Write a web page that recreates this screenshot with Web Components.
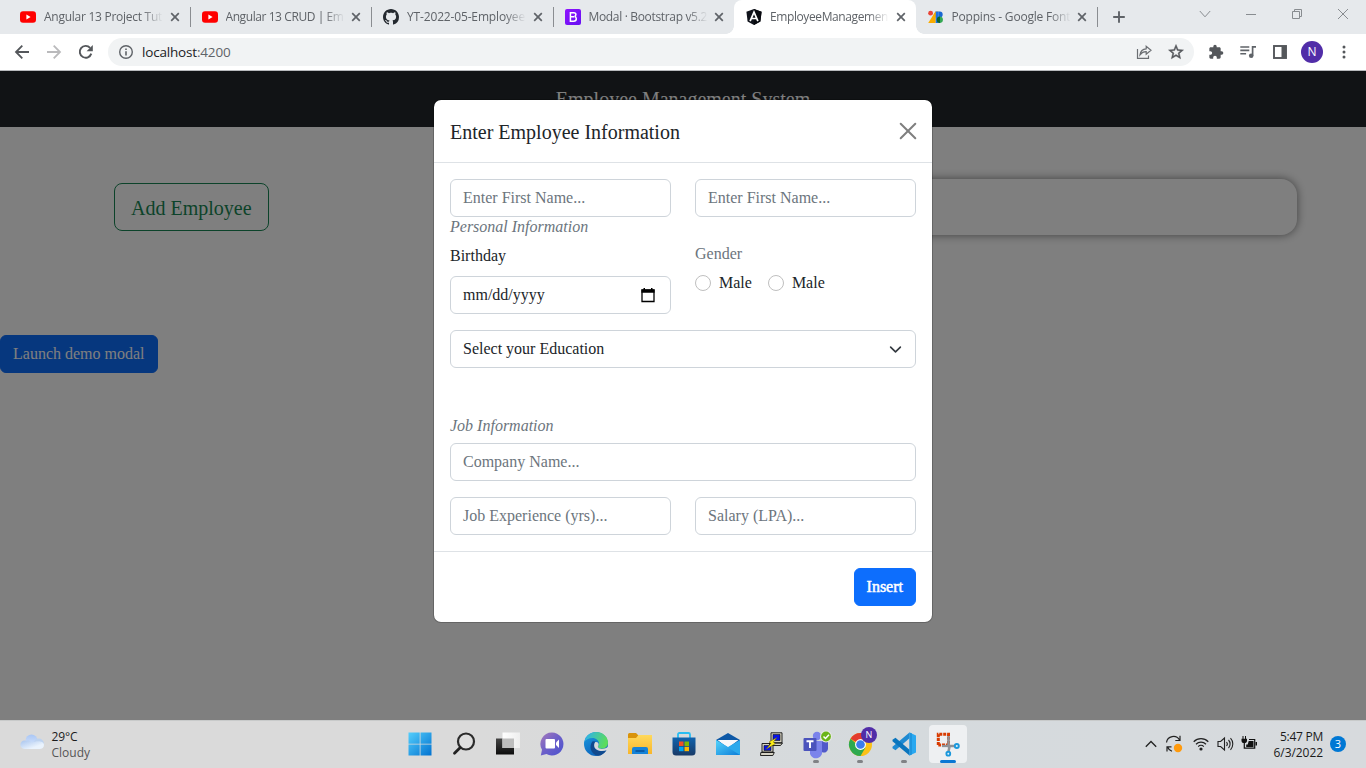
<!DOCTYPE html>
<html lang="en">
<head>
<meta charset="utf-8">
<title>EmployeeManagement</title>
<style>
html,body{margin:0;height:100%;overflow:hidden}
body{font-family:"Liberation Serif","Times New Roman",serif}
</style>
</head>
<body>
<desktop-screen></desktop-screen>
<script>
const ICONS = {
youtube:['0 0 16 16','<rect y="2.2" width="16" height="11.6" rx="3" fill="#f00"/><path d="M6.4 5.5v5l4.2-2.5z" fill="#fff"/>'],
github:['0 0 16 16','<path fill="#24292f" d="M8 0C3.58 0 0 3.58 0 8c0 3.54 2.29 6.53 5.47 7.59.4.07.55-.17.55-.38 0-.19-.01-.82-.01-1.49-2.01.37-2.53-.49-2.69-.94-.09-.23-.48-.94-.82-1.13-.28-.15-.68-.52-.01-.53.63-.01 1.08.58 1.23.82.72 1.21 1.87.87 2.33.66.07-.52.28-.87.51-1.07-1.78-.2-3.64-.89-3.64-3.95 0-.87.31-1.59.82-2.15-.08-.2-.36-1.02.08-2.12 0 0 .67-.21 2.2.82.64-.18 1.32-.27 2-.27s1.36.09 2 .27c1.53-1.04 2.2-.82 2.2-.82.44 1.1.16 1.92.08 2.12.51.56.82 1.27.82 2.15 0 3.07-1.87 3.75-3.65 3.95.29.25.54.73.54 1.48 0 1.07-.01 1.93-.01 2.2 0 .21.15.46.55.38A8.01 8.01 0 0 0 16 8c0-4.42-3.58-8-8-8z"/>'],
bootstrap:['0 0 16 16','<defs><linearGradient id="g" x2="1" y2="1"><stop stop-color="#9013fe"/><stop offset="1" stop-color="#6610f2"/></linearGradient></defs><rect width="16" height="16" rx="2" fill="url(#g)"/><path d="M5.4 3.7h3.4c1.4 0 2.1.8 2.1 1.9 0 1-.6 1.7-1.4 1.9 1.1.2 1.8 1 1.8 2.2 0 1.600-1.100 2.500-2.800 2.500H5.400zM5.400 7.700h3.600" fill="none" stroke="#fff" stroke-width="1.500"/>'],
angular:['0 0 16 16','<path d="M8 0l7.600 2.700-1.200 9.900L8 16l-6.400-3.400L.4 2.700z" fill="#10131b"/><path d="M8 0l7.600 2.700-1.200 9.900L8 16z" fill="#080a0f"/><path d="M4.100 12.200L8 3.200l3.900 9M5.700 9.500h4.600" fill="none" stroke="#fff" stroke-width="1.700"/>'],
gfonts:['0 0 16 16','<path d="M7.500 2.500h3L5 14H.2z" fill="#f9ab00"/><circle cx="2.600" cy="4.200" r="2.400" fill="#ea4335"/><path d="M7.500 2.500h3.300V14H7.500z" fill="#1a73e8"/><path d="M5.500 6l2-3.500V14H2.200z" fill="#f9ab00"/><path d="M10.800 2.500h1a2.900 2.900 0 0 1 0 5.800h-1z" fill="#1967d2"/><path d="M10.800 7.500h1.400a3.300 3.300 0 0 1 0 6.500h-1.400z" fill="#34a853"/><path d="M12 7.500v6.400a3.200 3.200 0 0 1 0-6.400" fill="#0d652d"/>'],
x:['0 0 10 10','<path d="M1.200 1.200l7.600 7.600M8.800 1.200L1.200 8.800" stroke="#5f6368" stroke-width="1.700"/>'],
plus:['0 0 12 12','<path d="M6 .2v11.600M.2 6h11.600" stroke="#5f6368" stroke-width="1.900"/>'],
wchev:['0 0 12 8','<path d="M.8 1L6 6.800 11.200 1" fill="none" stroke="#888c90"/>'],
wmin:['0 0 12 10','<path d="M1 5.500h10" stroke="#888c90"/>'],
wmax:['0 0 12 12','<path d="M1.500 3.500h7v7h-7zM3.500 3.500v-2h7v7h-2" fill="none" stroke="#888c90"/>'],
wx:['0 0 12 12','<path d="M1 1l10 10M11 1L1 11" stroke="#888c90"/>'],
back:['0 0 16 16','<path fill="none" stroke="#54575b" stroke-width="1.800" d="M15 8H2.200M8.300 1.700L2 8l6.300 6.300"/>'],
fwd:['0 0 16 16','<path fill="none" stroke="#bababc" stroke-width="1.800" d="M1 8h12.800M7.700 1.700L14 8l-6.300 6.300"/>'],
reload:['0 0 16 16','<path d="M13.300 9.600a5.900 5.900 0 1 1-1.200-5.700" fill="none" stroke="#54575b" stroke-width="1.900"/><path d="M14.800 1v6.200H8.600z" fill="#54575b"/>'],
info:['0 0 16 16','<circle cx="8" cy="8" r="6.300" fill="none" stroke="#5f6368" stroke-width="1.400"/><path d="M8 7.200v4.200M8 4.400V6" stroke="#5f6368" stroke-width="1.600"/>'],
share:['0 0 16 16','<path d="M1.500 5v9.300h11v-2.800M4 10.800C4.500 7 6.600 5 10.200 4.800V2.200L15 6.200l-4.800 4V7.700C7.500 7.600 5.600 8.700 4 10.800z" fill="none" stroke="#6b6e72" stroke-width="1.200"/>'],
star:['0 0 24 24','<path fill="#54575b" stroke="#54575b" stroke-width=".6" d="M22 9.240l-7.190-.62L12 2 9.190 8.630 2 9.240l5.460 4.730L5.820 21 12 17.270 18.180 21l-1.630-7.030zM12 15.400l-3.760 2.270 1-4.280-3.320-2.880 4.380-.38L12 6.100l1.710 4.040 4.380.38-3.320 2.880 1 4.280z"/>'],
puzzle:['0 0 24 24','<path fill="#54575b" d="M20.500 11H19V7c0-1.100-.9-2-2-2h-4V3.500a2.500 2.500 0 0 0-5 0V5H4c-1.100 0-1.990.9-1.990 2v3.800H3.500c1.490 0 2.700 1.210 2.700 2.700s-1.210 2.700-2.700 2.700H2V20c0 1.100.9 2 2 2h3.800v-1.500c0-1.490 1.210-2.700 2.700-2.700s2.700 1.210 2.700 2.700V22H17c1.100 0 2-.9 2-2v-4h1.500a2.500 2.500 0 0 0 0-5z"/>'],
music:['0 0 16 14','<path d="M.3 2h9M.3 5.400h9M.3 8.800h5.800" stroke="#5f6368" stroke-width="1.600"/><path d="M12.600 10.800V1.800H16" fill="none" stroke="#5f6368" stroke-width="1.700"/><circle cx="11.200" cy="10.800" r="2.300" fill="#5f6368"/>'],
panel:['0 0 14 14','<rect x="1" y="1" width="12" height="12" fill="none" stroke="#54575b" stroke-width="1.900"/><path d="M8.500 1H13v12H8.500z" fill="#54575b"/>'],
dots:['0 0 4 14','<circle cx="2" cy="2" r="1.500" fill="#54575b"/><circle cx="2" cy="7" r="1.500" fill="#54575b"/><circle cx="2" cy="12" r="1.500" fill="#54575b"/>'],
mclose:['0 0 16 16','<path d="M.7.700l14.600 14.600M15.300.700L.7 15.300" stroke="#7f7f7f" stroke-width="2" stroke-linecap="round"/>'],
cal:['0 0 14 14','<path d="M1 2h12v11.500H1z" fill="none" stroke="#000" stroke-width="1.300"/><path d="M.4 1.500h13.200v3.300H.4zM2.500 0H4v2H2.500zM10 0h1.500v2H10z"/>'],
chev:['0 0 16 16','<path d="M2 5l6 6 6-6" fill="none" stroke="#343a40" stroke-width="2" stroke-linecap="round" stroke-linejoin="round"/>'],
cloud:['0 0 24 16','<defs><linearGradient id="a" x2="0" y2="1"><stop stop-color="#a9c6f5"/><stop offset="1" stop-color="#d8e6fb"/></linearGradient><linearGradient id="b" x2="1" y2="1"><stop stop-color="#a8c4ee"/><stop offset=".7" stop-color="#eaf3fd"/></linearGradient></defs><circle cx="11.500" cy="6.500" r="6" fill="url(#a)"/><circle cx="18.800" cy="9.500" r="5" fill="#bdd3f0"/><path d="M4.500 15a4.300 4.300 0 1 1 2-8.200c2.500-1 4.500.2 5.500 2 3-2.200 12-2.800 12 2.200 0 2.500-2 4-4.500 4z" fill="url(#b)"/>'],
start:['0 0 24 24','<defs><linearGradient id="s" gradientUnits="userSpaceOnUse" x1="0" y1="0" x2="24" y2="24"><stop stop-color="#55d0fd"/><stop offset="1" stop-color="#0070cf"/></linearGradient></defs><path fill="url(#s)" d="M.5.500h11.200v11.200H.5zM12.500.500h11v11.200h-11zM.5 12.500h11.200v11H.5zM12.500 12.500h11v11h-11z"/>'],
search:['0 0 24 24','<circle cx="14" cy="9.500" r="8" fill="#e4e4e4" fill-opacity=".5" stroke="#2b2b2b" stroke-width="2.200"/><path d="M8.300 15.500L2.500 21.300" stroke="#222" stroke-width="2.800" stroke-linecap="round"/>'],
task:['0 0 24 24','<defs><linearGradient id="a" x2="0" y2="1"><stop stop-color="#444"/><stop offset="1" stop-color="#0c0c0c"/></linearGradient><linearGradient id="w" x2="1"><stop stop-color="#fff"/><stop offset="1" stop-color="#eee"/></linearGradient></defs><path d="M0 6.500h18v16H0z" fill="url(#a)"/><path d="M6.500.500h17.500v15.500H6.500z" fill="url(#w)"/><path d="M6.500 6.500H18V16H6.500z" fill="#bdbdbd"/>'],
chat:['0 0 24 24','<defs><linearGradient id="a" x2="1" y2="1"><stop stop-color="#a57abb"/><stop offset=".5" stop-color="#6c5fc9"/><stop offset="1" stop-color="#4a52cf"/></linearGradient></defs><path d="M12 .5a11.500 11.500 0 1 1-5.500 21.600L.8 23.500 2 17.800A11.500 11.500 0 0 1 12 .5z" fill="url(#a)"/><rect x="5.500" y="7" width="9.500" height="9.500" rx="1" fill="#fff"/><path d="M16 10.500l3-3v8.500l-3-3z" fill="#fff"/>'],
edge:['0 0 24 24','<defs><linearGradient id="a" x2="1" y1="0" y2=".3"><stop offset=".1" stop-color="#2fb3e8"/><stop offset="1" stop-color="#5bdc5c"/></linearGradient><linearGradient id="b" x2=".6" y2="1"><stop stop-color="#1b9de2"/><stop offset="1" stop-color="#0b5fb8"/></linearGradient></defs><circle cx="12" cy="12" r="12" fill="url(#b)"/><path d="M.6 9.500C2 3.500 6.500 0 12 0c7 0 12 5 12 10.500 0 4-2.700 6.200-6 6.200-2.500 0-4.200-1-4.200-1.900 0-.7 1.200-1 1.200-3.200C15 8.500 12 6 8.500 6 4.500 6 1.800 8 .6 9.500z" fill="url(#a)"/><path d="M8.700 9.200C4.500 13.500 6.500 22.500 14 23.800c4-.4 7-2.800 8.500-5.800-5 2.500-11.500 1-12.300-4-.2-2 .2-3.800 1.500-4.600z" fill="#11498d"/><path d="M11.200 10c2.500-.5 4 1.500 3.300 3.300-.6 1.200-.8 1.500-.3 2.200 1.800 2.200 6 1.500 8.300.3l1.600-.8v2.800l-1 .2c-4.800 2.300-12.300.9-12.900-3.900-.1-1.600.2-3 1-3.900z" fill="#dadada"/>'],
folder:['0 0 24 24','<defs><linearGradient id="a" x2="0" y2="1"><stop stop-color="#ffd95c"/><stop offset="1" stop-color="#f8b62b"/></linearGradient></defs><path d="M0 2.500a1.500 1.500 0 0 1 1.500-1.500H8l2.500 2.500V8H0z" fill="#d9930b"/><path d="M0 6h8l2.500-3H24v19H0z" fill="url(#a)"/><path d="M4 22v-5a2 2 0 0 1 2-2h12a2 2 0 0 1 2 2v5z" fill="#1583d8"/><path d="M7.500 18h9v2h-9z" fill="#0a5ca8"/>'],
store:['0 0 24 24','<defs><linearGradient id="a" x2="0" y2="1"><stop stop-color="#1063ae"/><stop offset="1" stop-color="#193a67"/></linearGradient></defs><path d="M6 6V2.500C6 1.500 6.500 1 7.500 1h9c1 0 1.500.5 1.500 1.500V6" fill="none" stroke="#28bdf2" stroke-width="1.800"/><path d="M.5 5.500h23V20a3.500 3.500 0 0 1-3.500 3.500H4A3.500 3.500 0 0 1 .5 20z" fill="url(#a)"/><path d="M7 9.500h4.500V14H7z" fill="#f25022"/><path d="M12.500 9.500H17V14h-4.500z" fill="#7fba00"/><path d="M7 14.800h4.500v4.400H7z" fill="#00a4ef"/><path d="M12.500 14.800H17v4.400h-4.500z" fill="#ffb900"/>'],
mail:['0 0 24 24','<defs><linearGradient id="a" x2="1" y2="1"><stop stop-color="#54d4fb"/><stop offset="1" stop-color="#0c7cd8"/></linearGradient></defs><path d="M0 8l12-7 12 7v7H0z" fill="#0d58a6"/><path d="M1.500 8h21L12 16z" fill="#f7f8fa"/><path d="M0 8l12 7 12-7v15H0z" fill="#2ba9ec"/><path d="M0 8l24 15H0z" fill="url(#a)"/>'],
putty:['0 0 24 24','<path d="M11 .8h11v10H11zM9.500 11h13l-2 2.500h-11zM2 11.500h11v8.500H2zM.8 20.500h13.500l-1.500 3H.5z" fill="#d5d2c4" stroke="#111" stroke-width=".9"/><path d="M13 2.500h7v6h-7zM4 13.500h7v5H4z" fill="#0712e8" stroke="#111" stroke-width=".6"/><path d="M17 5.500l-8 4.500 2 1.500-5 5.700 9.300-5.400-2-1.700z" fill="#ffef16" stroke="#665c00" stroke-width=".5"/>'],
teams:['0 0 30 28','<circle cx="16" cy="6" r="4.200" fill="#7b83eb"/><path d="M9 11h12v9a6 6 0 0 1-12 4z" fill="#7b83eb"/><path d="M21 11h6v8a4 4 0 0 1-6 3z" fill="#5059c9"/><rect x="2.500" y="8" width="13" height="13" rx="1" fill="#4b53bc"/><path d="M5.500 11.200h7M9 11.200V18" stroke="#fff" stroke-width="1.900"/><circle cx="25" cy="6.500" r="6" fill="#e7e8e4"/><circle cx="25" cy="6.500" r="4.900" fill="#6bb518"/><path d="M22.500 6.500l2 2 3.500-3.800" fill="none" stroke="#fff" stroke-width="1.500"/>'],
chrome:['0 0 24 24','<circle cx="12" cy="12" r="12" fill="#fbc116"/><path d="M12 12L1.600 6A12 12 0 0 1 22.400 6z" fill="#e33b2e"/><path d="M12 0a12 12 0 0 1 10.400 6H12z" fill="#e33b2e"/><path d="M1.600 6A12 12 0 0 0 12 24l5.200-9H12z" fill="#2da94f"/><circle cx="12" cy="12" r="5.700" fill="#fff"/><circle cx="12" cy="12" r="4.500" fill="#3b7ded"/>'],
vscode:['0 0 24 24','<path d="M17.500.500L24 3.500v17l-6.500 3z" fill="#29a8f0"/><path d="M17.500.500v5.800L3.500 18.200.5 16.200v-1.400z" fill="#1e8ad2"/><path d="M17.500 23.500v-5.800L3.500 5.800.5 7.800v1.400z" fill="#0a75bd"/><path d="M17.500.500l2.500 1v21l-2.500 1z" fill="#1f95dd"/>'],
snip:['0 0 24 24','<path d="M2.300 13V2.300H12.500V13H2.300" fill="none" stroke="#d83b01" stroke-width="3" stroke-dasharray="3 .9"/><path d="M12.500 4v10H20M13.500 14.500l-1 5" fill="none" stroke="#8e9297" stroke-width="2.500"/><path d="M12.500 14H6" stroke="#8e9297" stroke-width="2.300"/><circle cx="20.800" cy="14" r="2" fill="#dff0fa" stroke="#1b98dc" stroke-width="1.900"/><circle cx="12.300" cy="21.700" r="1.900" fill="#dff0fa" stroke="#1b98dc" stroke-width="1.900"/>'],
up:['0 0 12 8','<path d="M.8 6.700L6 1.500l5.200 5.200" fill="none" stroke="#222" stroke-width="1.300"/>'],
sync:['0 0 18 18','<path d="M1.500 7.500A7 7 0 0 1 14.500 5M15 .8v4.700h-4.700M7 16.300A7 7 0 0 1 2.600 12M2 16.500V11.800h4.500" fill="none" stroke="#222" stroke-width="1.200"/><circle cx="13" cy="13" r="4.200" fill="#ff9a0d"/>'],
wifi:['0 0 16 14','<path d="M.7 4.700a10.400 10.400 0 0 1 14.600 0M3 7.200a7.200 7.200 0 0 1 10 0M5.200 9.600a4 4 0 0 1 5.600 0" fill="none" stroke="#222" stroke-width="1.200"/><circle cx="8" cy="12" r="1.600" fill="#222"/>'],
vol:['0 0 17 14','<path d="M1 4.500h2.600L7.500 1v12L3.600 9.500H1z" fill="none" stroke="#222" stroke-width="1.100"/><path d="M9.500 5a3 3 0 0 1 0 4M11.500 3a5.800 5.800 0 0 1 0 8M13.500 1.200a8.500 8.500 0 0 1 0 11.600" fill="none" stroke="#222" stroke-width="1.100"/>'],
batt:['0 0 17 14','<path d="M2 0v3M4.500 0v3" stroke="#111" stroke-width="1"/><path d="M.5 2.700h5.500v2c0 1.500-1 2.300-2.800 2.300S.5 6.200.5 4.700z" fill="#111"/><path d="M3.300 6v6.200h10.400V3.500H8" fill="none" stroke="#111" stroke-width="1.200"/><path d="M5.200 8.500h1.500l1-3.500h4.800v6H5.200zM14.500 6H16v3.500h-1.500z" fill="#111"/>']
};
function define(name, html, init){
  customElements.define(name, class extends HTMLElement{
    constructor(){super();this.attachShadow({mode:'open'});}
    connectedCallback(){
      if(this.ready) return; this.ready = true;
      this.shadowRoot.innerHTML = typeof html === 'function' ? html(this) : html;
      if(init) init(this);
    }
  });
}
define('ui-icon', el => {
  const [box, body] = ICONS[el.getAttribute('name')];
  const w = el.getAttribute('w'), h = el.getAttribute('h') || w;
  return `<style>:host{display:block;flex:none;width:${w}px;height:${h}px}svg{display:block;width:100%;height:100%;overflow:visible}</style><svg viewBox="${box}">${body}</svg>`;
});
/* One line of interface text, tracked so that it occupies the width given by the "w" attribute. */
define('fit-text', `<style>:host{display:block;white-space:pre;line-height:16px}span{display:inline-block}</style><span><slot></slot></span>`, el => {
  const s = el.shadowRoot.querySelector('span'), n = el.textContent.length;
  s.style.letterSpacing = ((+el.getAttribute('w') - s.getBoundingClientRect().width) / n) + 'px';
});
define('browser-tab', el => `<style>
:host{display:flex;box-sizing:border-box;width:181.5px;height:34px;align-items:center;padding:0 10px 0 12px;flex:none;position:relative}
.t{width:119px;margin-left:8px;overflow:hidden;-webkit-mask:linear-gradient(90deg,#000 98px,transparent 119px);mask:linear-gradient(90deg,#000 98px,transparent 119px)}
.x{margin-left:7px}
:host([line])::after{content:"";position:absolute;right:-1px;top:7px;width:1px;height:20px;background:#8a8d91}
:host([active]){background:#fff;border-radius:8px 8px 0 0}
:host([active])::before,:host([active])::after{content:"";position:absolute;bottom:0;width:8px;height:8px}
:host([active])::before{left:-8px;background:radial-gradient(circle at 0 0,transparent 7.500px,#fff 8px)}
:host([active])::after{right:-8px;background:radial-gradient(circle at 100% 0,transparent 7.500px,#fff 8px)}
</style><ui-icon name="${el.getAttribute('icon')}" w="16"></ui-icon><div class="t"><fit-text w="${el.getAttribute('w')}">${el.getAttribute('label')}</fit-text></div><ui-icon class="x" name="x" w="10"></ui-icon>`);
define('browser-chrome', `<style>
:host{display:block;height:71px;font:12px/16px "Open Sans","Noto Sans",sans-serif;color:#5f6368;background:#fff}
.tabs{display:flex;background:#e6e9ec;height:34px;padding-left:8px;align-items:center}
.plus{margin-left:16px}
.win{display:flex;margin-left:auto;padding-right:17px;gap:34px;align-items:center;margin-top:-6px}
.bar{display:flex;height:36px;align-items:center;padding-left:14px;box-sizing:border-box}
.nav{display:flex;gap:16px;width:94px;flex:none}
.omni{display:flex;align-items:center;box-sizing:border-box;width:1086px;height:28px;border-radius:14px;background:#f1f3f4;padding:0 9px 0 10px;flex:none}
.omni fit-text{font-size:13.500px;margin-left:8px;color:#5f6368}
.omni b{font-weight:400;color:#202124}
.sh{margin-left:auto;margin-right:15px}
.acts{display:flex;align-items:center;margin-left:14px}
.av{width:22px;height:22px;border-radius:50%;background:#512da8;color:#fff;display:grid;place-items:center;font-size:12px;margin:0 19px 0 14px}
.rule{height:1px;background:#b8babd}
</style>
<div class="tabs">
<browser-tab icon="youtube" label="Angular 13 Project Tut" w="118" line></browser-tab>
<browser-tab icon="youtube" label="Angular 13 CRUD | Em" w="118" line></browser-tab>
<browser-tab icon="github" label="YT-2022-05-Employee" w="118" line></browser-tab>
<browser-tab icon="bootstrap" label="Modal · Bootstrap v5.2" w="118.500"></browser-tab>
<browser-tab icon="angular" label="EmployeeManagemen" w="118" active></browser-tab>
<browser-tab icon="gfonts" label="Poppins - Google Font" w="118.800" line></browser-tab>
<ui-icon class="plus" name="plus" w="12"></ui-icon>
<div class="win"><ui-icon name="wchev" w="12" h="8"></ui-icon><ui-icon name="wmin" w="12" h="10"></ui-icon><ui-icon name="wmax" w="12"></ui-icon><ui-icon name="wx" w="12"></ui-icon></div>
</div>
<div class="bar">
<div class="nav"><ui-icon name="back" w="16"></ui-icon><ui-icon name="fwd" w="16"></ui-icon><ui-icon name="reload" w="16"></ui-icon></div>
<div class="omni"><ui-icon name="info" w="16"></ui-icon><fit-text w="88.500"><b>localhost</b>:4200</fit-text><ui-icon class="sh" name="share" w="16"></ui-icon><ui-icon name="star" w="18"></ui-icon></div>
<div class="acts"><ui-icon name="puzzle" w="16"></ui-icon><ui-icon name="music" w="16" h="14" style="margin:0 17px 0 16px"></ui-icon><ui-icon name="panel" w="14"></ui-icon><div class="av">N</div><ui-icon name="dots" w="4" h="14"></ui-icon></div>
</div><div class="rule"></div>`);
define('app-button', `<style>
:host{display:inline-block;box-sizing:border-box;border:1px solid #0d6efd;background:#0d6efd;color:#fff;border-radius:6px;padding:6px 12px;font-size:16px;line-height:24px;white-space:nowrap}
:host([outline]){background:none;color:#198754;border-color:#198754;border-radius:8px;font-size:20px;line-height:30px;padding:9px 16px 7px}
</style><slot></slot>`);
define('app-page', `<style>
:host{display:block;height:100%;background:#fff;color:#212529}
nav{height:56px;background:#23272b;color:#fff;font-size:20px;line-height:57px;text-align:center}
.row{display:flex;align-items:flex-start;padding:52px 69px 0 114px;height:156px}
app-button[outline]{margin-top:4px}
.card{margin-left:186px;flex:1;height:56px;border-radius:16px;box-shadow:0 0 10px rgba(0,0,0,.5)}
</style><nav>Employee Management System</nav>
<div class="row"><app-button outline>Add Employee</app-button><div class="card"></div></div>
<app-button>Launch demo modal</app-button>`);
define('form-field', `<style>
:host{display:flex;box-sizing:border-box;height:38px;border:1px solid #ced4da;border-radius:6px;padding:6px 12px;font-size:16px;line-height:24px;color:#6c757d;background:#fff;justify-content:space-between;align-items:center}
:host([filled]){color:#212529}
</style><span><slot></slot></span><slot name="end"></slot>`);
define('radio-option', `<style>:host{display:flex;align-items:center;gap:8px;line-height:24px}i{width:16px;height:16px;box-sizing:border-box;border:1px solid #bfbfbf;border-radius:50%}</style><i></i><span><slot></slot></span>`);
define('employee-modal', `<style>
:host{display:block;box-sizing:border-box;width:500px;border:1px solid rgba(0,0,0,.2);border-radius:8px;background:#fff;background-clip:padding-box;color:#212529;font-size:16px;line-height:24px}
header{display:flex;justify-content:space-between;align-items:center;height:62px;padding:0 16px;border-bottom:1px solid #dee2e6;font-size:20px}
header span{padding-top:2px}
main{padding:16px}
.two{display:grid;grid-template-columns:1fr 1fr;column-gap:24px}
em{display:block;color:#6c757d}
.p{margin-top:-2px;margin-bottom:5px}
.lbl{margin-bottom:8px}
.g{color:#6c757d;margin:-2px 0 5px}
.radios{display:flex;gap:16px}
.sel{margin-top:16px}
.j{margin:46px 0 5px}
.co{margin-bottom:16px}
footer{display:flex;justify-content:flex-end;padding:16px;border-top:1px solid #dee2e6}
footer app-button{-webkit-text-stroke:.5px #fff}
</style>
<header><span>Enter Employee Information</span><ui-icon name="mclose" w="16"></ui-icon></header>
<main>
<div class="two"><form-field>Enter First Name...</form-field><form-field>Enter First Name...</form-field></div>
<em class="p">Personal Information</em>
<div class="two"><div><div class="lbl">Birthday</div><form-field filled>mm/dd/yyyy<ui-icon slot="end" name="cal" w="14" style="margin-right:3px"></ui-icon></form-field></div>
<div><div class="g">Gender</div><div class="radios"><radio-option>Male</radio-option><radio-option>Male</radio-option></div></div></div>
<form-field class="sel" filled>Select your Education<ui-icon slot="end" name="chev" w="13" style="margin-right:1.500px"></ui-icon></form-field>
<em class="j">Job Information</em>
<form-field class="co">Company Name...</form-field>
<div class="two"><form-field>Job Experience (yrs)...</form-field><form-field>Salary (LPA)...</form-field></div>
</main>
<footer><app-button>Insert</app-button></footer>`);
define('task-item', el => `<style>
:host{display:grid;place-items:center;position:relative;width:44px;height:48px}
:host([active])::before{content:"";position:absolute;left:3px;top:5px;width:38px;height:38px;border-radius:4px;background:#eef0f2}
ui-icon{position:relative}
:host([open])::after,:host([active])::after{content:"";position:absolute;bottom:5px;width:6px;height:3px;border-radius:2px;background:#808285}
:host([active])::after{width:16px;background:#0a78d4}
.b{position:absolute;left:23px;top:7px;width:16px;height:16px;border-radius:50%;background:#512da8;color:#fff;font:9px/16px "Open Sans",sans-serif;text-align:center}
</style><ui-icon name="${el.getAttribute('icon')}" w="${el.getAttribute('w')||24}" h="${el.getAttribute('h')||el.getAttribute('w')||24}"></ui-icon>${el.hasAttribute('badge')?`<span class="b">${el.getAttribute('badge')}</span>`:''}`);
define('task-bar', `<style>
:host{display:grid;grid-template-columns:398px 572px 1fr;height:48px;box-sizing:border-box;background:linear-gradient(90deg,#dadada 0,#dadada 35%,#d5dadd 65%,#d7dadd);font:12px/16px "Open Sans","Noto Sans",sans-serif;color:#1b1b1b;box-shadow:inset 0 1px #c8caca}
.l{display:flex;align-items:center;padding:2px 0 0 20px;gap:7.500px}
.l fit-text:last-child{color:#555}
.m{display:flex}
.r{display:flex;align-items:center;justify-content:flex-end;padding-right:20px}
.clock{display:flex;flex-direction:column;align-items:flex-end;margin:1px 7px 0 16px}
.n{width:16px;height:16px;border-radius:50%;background:#0078d4;color:#fff;text-align:center;font-size:11px}
</style>
<div class="l"><ui-icon name="cloud" w="24" h="16" style="margin-top:-6px"></ui-icon><div><fit-text w="26">29°C</fit-text><fit-text w="38.500">Cloudy</fit-text></div></div>
<div class="m">
<task-item icon="start"></task-item><task-item icon="search"></task-item><task-item icon="task"></task-item><task-item icon="chat"></task-item><task-item icon="edge"></task-item><task-item icon="folder"></task-item><task-item icon="store"></task-item><task-item icon="mail"></task-item><task-item icon="putty"></task-item><task-item icon="teams" w="30" h="28" open></task-item><task-item icon="chrome" w="23" badge="N" open></task-item><task-item icon="vscode" open></task-item><task-item icon="snip" active></task-item>
</div>
<div class="r"><ui-icon name="up" w="12" h="8"></ui-icon><ui-icon name="sync" w="18" style="margin:0 10px 0 8px"></ui-icon><ui-icon name="wifi" w="16" h="14"></ui-icon><ui-icon name="vol" w="17" h="14" style="margin:0 7px 0 8px"></ui-icon><ui-icon name="batt" w="17" h="14" style="margin-top:-2px"></ui-icon>
<div class="clock"><fit-text w="43">5:47 PM</fit-text><fit-text w="49.500">6/3/2022</fit-text></div><div class="n">3</div></div>`);
define('desktop-screen', `<style>
:host{display:grid;grid-template-rows:71px 649px 48px;width:1366px;height:768px;overflow:hidden}
.view{position:relative}
.backdrop{position:absolute;inset:0;background:rgba(0,0,0,.5)}
.dialog{position:absolute;inset:0;display:flex;justify-content:center;align-items:flex-start;padding-top:28px}
</style>
<browser-chrome></browser-chrome>
<div class="view"><app-page></app-page><div class="backdrop"></div><div class="dialog"><employee-modal></employee-modal></div></div>
<task-bar></task-bar>`);
</script>
</body>
</html>
